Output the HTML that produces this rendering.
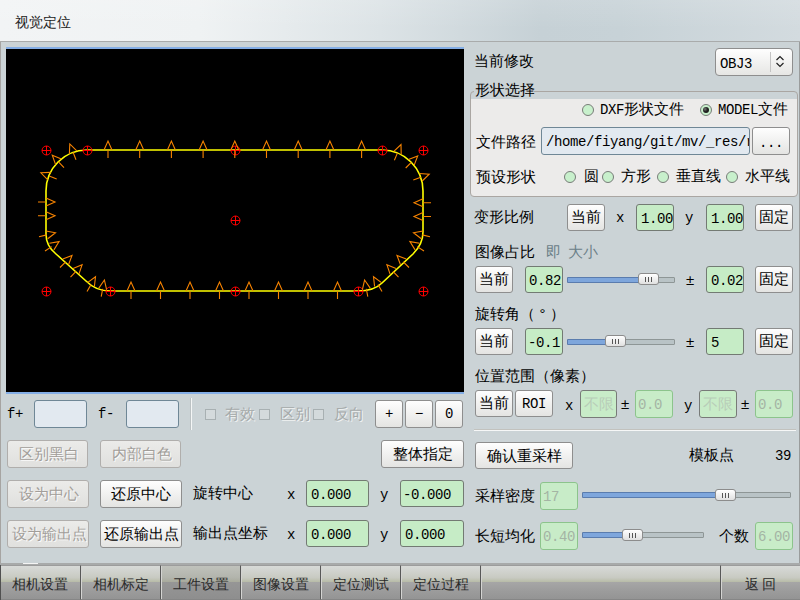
<!DOCTYPE html>
<html><head><meta charset="utf-8">
<style>
html,body{margin:0;padding:0;width:800px;height:600px;overflow:hidden;background:#cbd3d6;font-family:"Liberation Sans",sans-serif;position:relative}
div{box-sizing:border-box}
.a{position:absolute}
.t{position:absolute;font-size:15px;line-height:16px;color:#000;white-space:nowrap}
.m{font-family:"Liberation Mono",monospace;font-size:14px;letter-spacing:-0.4px}
.g{color:#6c8088}
.btn{position:absolute;border:1px solid #8e8e8e;border-radius:3px;background:linear-gradient(#fefefe,#e4e4e2);font-size:15px;color:#000;display:flex;align-items:center;justify-content:center;white-space:nowrap}
.dis{color:#a29e9a;text-shadow:1px 1px 0 #fafafa;background:linear-gradient(#ebebe9,#e0e0de);border-color:#b0aeac;padding-left:2px}
.in{position:absolute;border:1px solid #737a73;border-radius:3px;background:#c6ecc6;font-family:"Liberation Mono",monospace;font-size:14px;letter-spacing:-0.4px;color:#000;display:flex;align-items:center;padding-left:4px;padding-top:2px;white-space:nowrap;overflow:hidden}
.ind{background:#c8ecc8;border-color:#8cc48c;color:#a4b4a4;padding-left:2px}
.inb{background:#e2e9f0;border-color:#6f8796}
.rad{position:absolute;width:12px;height:12px;border-radius:50%;border:1px solid #787c78;background:#c8f0cc}
.chk{position:absolute;width:11px;height:11px;border:1px solid #a8b0b2;background:#d4dadc}
.sl{position:absolute;height:6px;border:1px solid #8e9696;border-radius:1px;background:#b9c3c6}
.slf{position:absolute;left:-1px;top:-1px;bottom:-1px;border:1px solid #5a7cae;border-radius:1px;background:#7ea6dc}
.hd{position:absolute;width:21px;height:12px;border:1px solid #8c8c8c;border-radius:3px;background:linear-gradient(#ffffff,#e0e0e0)}
.hd i{position:absolute;top:3px;width:1px;height:5px;background:#555}
.tab{position:absolute;top:565px;height:35px;border-top:1px solid #9c9c9c;border-right:1px solid #585858;border-bottom:1px solid #868686;box-shadow:inset 1px 0 #d4d4d2;font-size:14px;color:#2a2a2a;display:flex;align-items:center;justify-content:center;padding-top:5px;background:linear-gradient(#d8dad8 0%,#c8cac2 35%,#b8bca8 48%,#a6a6a6 49%,#9c9c9c 75%,#949494 100%)}
</style></head><body>
<!-- title bar -->
<div class="a" style="left:0;top:0;width:800px;height:41px;background:linear-gradient(90deg,#f2f4f5 0px,#eff2f3 200px,#dce3e6 380px,#c6d1d6 540px,#c7d2d7 620px,#d3dbdf 800px)"></div><div class="a" style="left:0;top:0;width:800px;height:41px;background:linear-gradient(rgba(255,255,255,.12),rgba(255,255,255,0) 70%)"></div>
<div class="t" style="left:15px;top:14px;color:#222;font-size:14px">视觉定位</div>
<div class="a" style="left:0;top:41px;width:800px;height:1px;background:#a9abab"></div>
<div class="a" style="left:0;top:42px;width:1px;height:523px;background:#a6a4a2"></div><div class="a" style="left:799px;top:42px;width:1px;height:523px;background:#9a9c9c"></div>

<!-- canvas -->
<div class="a" style="left:6px;top:47px;width:458px;height:347px;background:#000;border-top:2px solid #84aee6;border-bottom:2px solid #84aee6"></div>
<svg class="a" style="left:0;top:0" width="800" height="600" viewBox="0 0 800 600">
<path d="M87,150 L382,150 A41,41 0 0 1 423,191 L423,232 Q423,244 413,254 L382,283 Q374,291 358,291 L110,291 Q96,291 86,281 L56,254 Q46,246 46,234 L46,191 A41,41 0 0 1 87,150 Z" fill="none" stroke="#ffff00" stroke-width="1.6"/>
<g fill="none" stroke="#ff0000" stroke-width="1" id="mk"><circle cx="46.5" cy="150.5" r="4.5"/><path d="M42,150.5H51M46.5,146V155"/><circle cx="87.5" cy="150.5" r="4.5"/><path d="M83,150.5H92M87.5,146V155"/><circle cx="235.5" cy="150.5" r="4.5"/><path d="M231,150.5H240M235.5,146V155"/><circle cx="382.5" cy="150.5" r="4.5"/><path d="M378,150.5H387M382.5,146V155"/><circle cx="423.5" cy="150.5" r="4.5"/><path d="M419,150.5H428M423.5,146V155"/><circle cx="235.5" cy="220.5" r="4.5"/><path d="M231,220.5H240M235.5,216V225"/><circle cx="46.5" cy="291.5" r="4.5"/><path d="M42,291.5H51M46.5,287V296"/><circle cx="110.5" cy="291.5" r="4.5"/><path d="M106,291.5H115M110.5,287V296"/><circle cx="235.5" cy="291.5" r="4.5"/><path d="M231,291.5H240M235.5,287V296"/><circle cx="358.5" cy="291.5" r="4.5"/><path d="M354,291.5H363M358.5,287V296"/><circle cx="423.5" cy="291.5" r="4.5"/><path d="M419,291.5H428M423.5,287V296"/></g>
<g fill="none" stroke="#f88400" stroke-width="1.1" id="ar"><path d="M112.0,150.0L108.0,141.0L104.0,150.0M108.0,150.0L108.0,158.0"/><path d="M143.7,150.0L139.7,141.0L135.7,150.0M139.7,150.0L139.7,158.0"/><path d="M175.4,150.0L171.4,141.0L167.4,150.0M171.4,150.0L171.4,158.0"/><path d="M207.1,150.0L203.1,141.0L199.1,150.0M203.1,150.0L203.1,158.0"/><path d="M238.8,150.0L234.8,141.0L230.8,150.0M234.8,150.0L234.8,158.0"/><path d="M270.5,150.0L266.5,141.0L262.5,150.0M266.5,150.0L266.5,158.0"/><path d="M302.2,150.0L298.2,141.0L294.2,150.0M298.2,150.0L298.2,158.0"/><path d="M333.9,150.0L329.9,141.0L325.9,150.0M329.9,150.0L329.9,158.0"/><path d="M365.6,150.0L361.6,141.0L357.6,150.0M361.6,150.0L361.6,158.0"/><path d="M135.0,291.0L131.0,282.0L127.0,291.0M131.0,291.0L131.0,299.0"/><path d="M164.5,291.0L160.5,282.0L156.5,291.0M160.5,291.0L160.5,299.0"/><path d="M194.0,291.0L190.0,282.0L186.0,291.0M190.0,291.0L190.0,299.0"/><path d="M223.5,291.0L219.5,282.0L215.5,291.0M219.5,291.0L219.5,299.0"/><path d="M253.0,291.0L249.0,282.0L245.0,291.0M249.0,291.0L249.0,299.0"/><path d="M282.5,291.0L278.5,282.0L274.5,291.0M278.5,291.0L278.5,299.0"/><path d="M312.0,291.0L308.0,282.0L304.0,291.0M308.0,291.0L308.0,299.0"/><path d="M341.5,291.0L337.5,282.0L333.5,291.0M337.5,291.0L337.5,299.0"/><path d="M46.0,206.0L55.0,202.0L46.0,198.0M46.0,202.0L38.0,202.0"/><path d="M46.0,219.8L55.0,215.8L46.0,211.8M46.0,215.8L38.0,215.8"/><path d="M423.0,198.8L414.0,202.8L423.0,206.8M423.0,202.8L431.0,202.8"/><path d="M423.0,212.5L414.0,216.5L423.0,220.5M423.0,216.5L431.0,216.5"/><path d="M76.8,150.8L69.8,143.9L69.4,153.7M73.1,152.2L76.0,159.7"/><path d="M61.4,159.1L52.3,155.3L55.6,164.6M58.5,161.9L64.0,167.7"/><path d="M50.7,172.4L40.9,172.8L47.8,179.8M49.2,176.1L56.7,179.0"/><path d="M401.2,154.5L401.0,144.6L393.8,151.4M397.5,152.9L394.4,160.3"/><path d="M414.2,165.1L417.7,155.9L408.5,159.5M411.3,162.3L405.7,168.0"/><path d="M422.2,181.0L429.2,174.1L419.4,173.5M420.8,177.2L413.3,180.0"/><path d="M47.7,238.8L55.5,232.8L45.9,231.0M46.8,234.9L39.0,236.7"/><path d="M53.9,249.9L59.1,241.6L49.4,243.2M51.7,246.6L45.0,251.0"/><path d="M68.5,264.7L72.0,255.5L62.8,259.0M65.7,261.8L60.0,267.5"/><path d="M78.9,274.1L82.1,264.8L73.0,268.6M76.0,271.4L70.5,277.2"/><path d="M94.4,286.5L95.5,276.8L87.5,282.6M91.0,284.6L87.0,291.5"/><path d="M106.6,289.6L104.4,280.0L98.8,288.1M102.7,288.8L101.2,296.7"/><path d="M423.1,231.0L413.5,232.8L421.3,238.8M422.2,234.9L430.0,236.7"/><path d="M419.6,243.2L409.9,241.6L415.1,249.9M417.3,246.6L424.0,251.0"/><path d="M406.2,259.0L397.0,255.5L400.5,264.7M403.3,261.8L409.0,267.5"/><path d="M396.0,268.6L386.9,264.8L390.1,274.1M393.0,271.4L398.5,277.2"/><path d="M381.5,282.6L373.5,276.8L374.6,286.5M378.0,284.6L382.0,291.5"/><path d="M370.2,288.1L364.6,280.0L362.4,289.6M366.3,288.8L367.8,296.7"/></g>
</svg>

<!-- right panel -->
<div class="t" style="left:474px;top:53px">当前修改</div>
<div class="a" style="left:715px;top:48px;width:78px;height:28px;border:1px solid #8e8e8e;border-radius:4px;background:linear-gradient(#fefefe,#e6e6e4)"></div>
<div class="a" style="left:770px;top:52px;width:1px;height:20px;background:#c4c4c4"></div>
<div class="t m" style="left:720px;top:56px">OBJ3</div>
<svg class="a" style="left:775px;top:55px" width="11" height="13"><path d="M1.5,5 L5,1.5 L8.5,5 M1.5,8 L5,11.5 L8.5,8" fill="none" stroke="#222" stroke-width="1.2"/></svg>

<div class="a" style="left:470px;top:91px;width:328px;height:106px;border:1px solid #aaa6a2;border-radius:4px;background:linear-gradient(#cbd3d6 0,#cbd3d6 7px,#ecebea 7px)"></div>
<div class="a" style="left:474px;top:82px;width:60px;height:12px;background:#cbd3d6"></div>
<div class="t" style="left:475px;top:82px">形状选择</div>

<div class="rad" style="left:582px;top:104px"></div>
<div class="t" style="left:600px;top:101px"><span class="m">DXF</span>形状文件</div>
<div class="rad" style="left:700px;top:104px"><div class="a" style="left:2px;top:2px;width:6px;height:6px;border-radius:50%;background:radial-gradient(circle at 35% 35%,#777 0,#222 45%,#111 100%)"></div></div>
<div class="t" style="left:718px;top:101px"><span class="m">MODEL</span>文件</div>

<div class="t" style="left:476px;top:134px">文件路径</div>
<div class="in inb" style="left:541px;top:127px;width:209px;height:28px;padding-left:4px">/home/fiyang/git/mv/_res/r</div>
<div class="btn m" style="left:752px;top:127px;width:38px;height:28px;font-size:14px;padding-top:3px">...</div>

<div class="t" style="left:476px;top:169px">预设形状</div>
<div class="rad" style="left:564px;top:171px"></div><div class="t" style="left:584px;top:168px">圆</div>
<div class="rad" style="left:602px;top:171px"></div><div class="t" style="left:621px;top:168px">方形</div>
<div class="rad" style="left:657px;top:171px"></div><div class="t" style="left:676px;top:168px">垂直线</div>
<div class="rad" style="left:726px;top:171px"></div><div class="t" style="left:745px;top:168px">水平线</div>

<div class="t" style="left:474px;top:209px">变形比例</div>
<div class="btn" style="left:567px;top:204px;width:38px;height:27px">当前</div>
<div class="t m" style="left:616px;top:210px">x</div>
<div class="in" style="left:636px;top:204px;width:38px;height:27px">1.00</div>
<div class="t m" style="left:685px;top:210px">y</div>
<div class="in" style="left:706px;top:204px;width:38px;height:27px">1.00</div>
<div class="btn" style="left:755px;top:204px;width:38px;height:27px">固定</div>

<div class="t" style="left:475px;top:244px">图像占比<span class="g" style="margin-left:11px">即</span><span class="g" style="margin-left:7px">大小</span></div>
<div class="btn" style="left:475px;top:266px;width:38px;height:27px">当前</div>
<div class="in" style="left:525px;top:266px;width:38px;height:27px;padding-left:3px">0.82</div>
<div class="sl" style="left:567px;top:277px;width:108px"><div class="slf" style="width:74px"></div></div>
<div class="hd" style="left:638px;top:273px"><i style="left:6px"></i><i style="left:9px"></i><i style="left:12px"></i></div>
<div class="t" style="left:686px;top:272px">±</div>
<div class="in" style="left:706px;top:266px;width:38px;height:27px">0.02</div>
<div class="btn" style="left:755px;top:266px;width:38px;height:27px">固定</div>

<div class="t" style="left:475px;top:306px">旋转角（<span style="display:inline-block;width:15px;text-align:center">°</span>）</div>
<div class="btn" style="left:475px;top:328px;width:38px;height:27px">当前</div>
<div class="in" style="left:525px;top:328px;width:38px;height:27px;padding-left:2px">-0.1</div>
<div class="sl" style="left:567px;top:339px;width:108px"><div class="slf" style="width:40px"></div></div>
<div class="hd" style="left:605px;top:335px"><i style="left:6px"></i><i style="left:9px"></i><i style="left:12px"></i></div>
<div class="t" style="left:686px;top:334px">±</div>
<div class="in" style="left:706px;top:328px;width:38px;height:27px">5</div>
<div class="btn" style="left:755px;top:328px;width:38px;height:27px">固定</div>

<div class="t" style="left:475px;top:368px">位置范围（像素）</div>
<div class="btn" style="left:475px;top:390px;width:38px;height:27px">当前</div>
<div class="btn m" style="left:515px;top:390px;width:38px;height:27px;font-size:14px">ROI</div>
<div class="t m" style="left:565px;top:398px">x</div>
<div class="in ind" style="left:580px;top:390px;width:37px;height:28px;font-family:'Liberation Sans',sans-serif;font-size:15px;letter-spacing:0;border-color:#787a78;color:#b8ccb8;padding-left:3px;padding-top:0">不限</div>
<div class="t" style="left:621px;top:396px">±</div>
<div class="in ind" style="left:635px;top:390px;width:38px;height:28px">0.0</div>
<div class="t m" style="left:684px;top:398px">y</div>
<div class="in ind" style="left:699px;top:390px;width:38px;height:28px;font-family:'Liberation Sans',sans-serif;font-size:15px;letter-spacing:0;border-color:#787a78;color:#b8ccb8;padding-left:3px;padding-top:0">不限</div>
<div class="t" style="left:741px;top:396px">±</div>
<div class="in ind" style="left:755px;top:390px;width:38px;height:28px">0.0</div>

<div class="a" style="left:474px;top:429px;width:322px;height:1px;background:#c2c2be"></div><div class="a" style="left:474px;top:430px;width:322px;height:1px;background:#f6f7f7"></div>
<div class="btn" style="left:475px;top:442px;width:98px;height:27px;padding-top:1px">确认重采样</div>
<div class="t" style="left:689px;top:447px">模板点</div>
<div class="t m" style="left:775px;top:448px">39</div>

<div class="t" style="left:475px;top:488px">采样密度</div>
<div class="in ind" style="left:540px;top:482px;width:38px;height:28px">17</div>
<div class="sl" style="left:582px;top:492px;width:209px"><div class="slf" style="width:138px"></div></div>
<div class="hd" style="left:715px;top:489px"><i style="left:6px"></i><i style="left:9px"></i><i style="left:12px"></i></div>

<div class="t" style="left:475px;top:528px">长短均化</div>
<div class="in ind" style="left:540px;top:522px;width:38px;height:28px">0.40</div>
<div class="sl" style="left:582px;top:532px;width:122px"><div class="slf" style="width:45px"></div></div>
<div class="hd" style="left:622px;top:529px"><i style="left:6px"></i><i style="left:9px"></i><i style="left:12px"></i></div>
<div class="t" style="left:719px;top:528px">个数</div>
<div class="in ind" style="left:755px;top:522px;width:38px;height:28px;padding-left:2px">6.00</div>

<!-- left bottom -->
<div class="t m" style="left:7px;top:406px">f+</div>
<div class="in inb" style="left:34px;top:400px;width:53px;height:28px"></div>
<div class="t m" style="left:98px;top:406px">f-</div>
<div class="in inb" style="left:126px;top:400px;width:53px;height:28px"></div>
<div class="a" style="left:190px;top:398px;width:1px;height:32px;background:#bcc2c4"></div>
<div class="a" style="left:191px;top:398px;width:1px;height:32px;background:#f4f6f6"></div>
<div class="chk" style="left:205px;top:409px"></div><div class="t g" style="left:225px;top:406px;color:#a6aaaa;text-shadow:1px 1px 0 #f0f2f2">有效</div>
<div class="chk" style="left:259px;top:409px"></div><div class="t g" style="left:280px;top:406px;color:#a6aaaa;text-shadow:1px 1px 0 #f0f2f2">区别</div>
<div class="chk" style="left:313px;top:409px"></div><div class="t g" style="left:334px;top:406px;color:#a6aaaa;text-shadow:1px 1px 0 #f0f2f2">反向</div>
<div class="btn m" style="left:375px;top:400px;width:28px;height:28px;font-size:14px">+</div>
<div class="btn m" style="left:405px;top:400px;width:28px;height:28px;font-size:14px">−</div>
<div class="btn m" style="left:435px;top:400px;width:28px;height:28px;font-size:14px">0</div>

<div class="btn dis" style="left:7px;top:440px;width:81px;height:28px">区别黑白</div>
<div class="btn dis" style="left:100px;top:440px;width:81px;height:28px">内部白色</div>
<div class="btn" style="left:381px;top:440px;width:83px;height:28px">整体指定</div>

<div class="btn dis" style="left:7px;top:480px;width:82px;height:28px">设为中心</div>
<div class="btn" style="left:100px;top:480px;width:82px;height:28px">还原中心</div>
<div class="t" style="left:193px;top:485px">旋转中心</div>
<div class="t m" style="left:287px;top:487px">x</div>
<div class="in" style="left:306px;top:480px;width:63px;height:27px">0.000</div>
<div class="t m" style="left:380px;top:487px">y</div>
<div class="in" style="left:400px;top:480px;width:64px;height:27px;padding-left:2px">-0.000</div>

<div class="btn dis" style="left:7px;top:520px;width:82px;height:28px">设为输出点</div>
<div class="btn" style="left:100px;top:520px;width:82px;height:28px">还原输出点</div>
<div class="t" style="left:193px;top:525px">输出点坐标</div>
<div class="t m" style="left:287px;top:527px">x</div>
<div class="in" style="left:306px;top:520px;width:63px;height:27px">0.000</div>
<div class="t m" style="left:380px;top:527px">y</div>
<div class="in" style="left:400px;top:520px;width:64px;height:27px">0.000</div>

<!-- bottom tabs -->
<div class="a" style="left:0;top:563px;width:800px;height:2px;background:#a8aaaa"></div>
<div class="a" style="left:23px;top:563px;width:15px;height:1px;background:#f4f4f4"></div><div class="a" style="left:0;top:565px;width:1px;height:35px;background:#505050;z-index:2"></div>
<div class="tab" style="left:0;width:81px">相机设置</div>
<div class="tab" style="left:81px;width:80px">相机标定</div>
<div class="tab" style="left:161px;width:80px;background:linear-gradient(#c0c2bc 0%,#b2b4ac 35%,#a8aa9c 48%,#969696 49%,#8e8e8e 100%)">工件设置</div>
<div class="tab" style="left:241px;width:80px">图像设置</div>
<div class="tab" style="left:321px;width:80px">定位测试</div>
<div class="tab" style="left:401px;width:80px">定位过程</div>
<div class="tab" style="left:481px;width:240px"></div>
<div class="tab" style="left:721px;width:79px;border-right:0;border-left:0">返 回</div>
</body></html>
